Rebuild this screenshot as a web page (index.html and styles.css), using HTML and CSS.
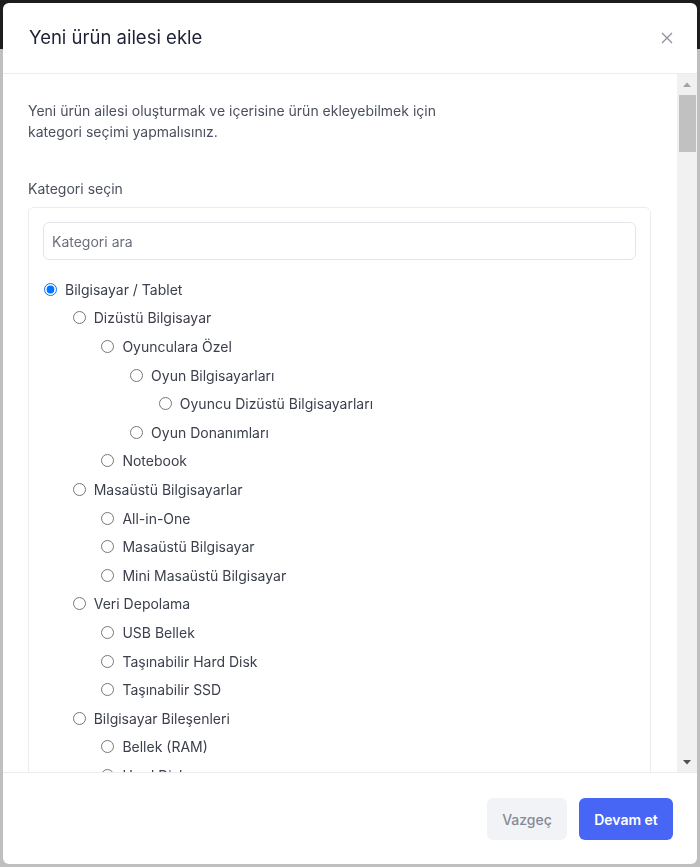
FILE: index.html
```html
<!DOCTYPE html>
<html lang="tr">
<head>
<meta charset="utf-8">
<title>Yeni ürün ailesi ekle</title>
<link rel="stylesheet" href="styles.css">
</head>
<body>
<div class="page">
  <div class="page-top"></div>
  <div class="page-rest"></div>
</div>
<div class="modal" role="dialog" aria-labelledby="modal-title">
  <header class="modal-header">
    <h2 class="modal-title" id="modal-title">Yeni ürün ailesi ekle</h2>
    <button class="close-btn" type="button" aria-label="Kapat">
      <svg width="12" height="12" viewBox="0 0 12 12"><path d="M1 1L11 11M11 1L1 11" stroke="#8e909b" stroke-width="1.3" fill="none"/></svg>
    </button>
  </header>
  <div class="body-wrap">
    <div class="modal-body">
      <p class="intro">Yeni ürün ailesi oluşturmak ve içerisine ürün ekleyebilmek için kategori seçimi yapmalısınız.</p>
      <div class="field-label">Kategori seçin</div>
      <div class="tree-box">
        <input class="search" type="text" placeholder="Kategori ara">
        <ul class="tree">
          <li class="row l0"><input type="radio" name="cat" checked><span>Bilgisayar / Tablet</span></li>
          <li class="row l1"><input type="radio" name="cat"><span>Dizüstü Bilgisayar</span></li>
          <li class="row l2"><input type="radio" name="cat"><span>Oyunculara Özel</span></li>
          <li class="row l3"><input type="radio" name="cat"><span>Oyun Bilgisayarları</span></li>
          <li class="row l4"><input type="radio" name="cat"><span>Oyuncu Dizüstü Bilgisayarları</span></li>
          <li class="row l3"><input type="radio" name="cat"><span>Oyun Donanımları</span></li>
          <li class="row l2"><input type="radio" name="cat"><span>Notebook</span></li>
          <li class="row l1"><input type="radio" name="cat"><span>Masaüstü Bilgisayarlar</span></li>
          <li class="row l2"><input type="radio" name="cat"><span>All-in-One</span></li>
          <li class="row l2"><input type="radio" name="cat"><span>Masaüstü Bilgisayar</span></li>
          <li class="row l2"><input type="radio" name="cat"><span>Mini Masaüstü Bilgisayar</span></li>
          <li class="row l1"><input type="radio" name="cat"><span>Veri Depolama</span></li>
          <li class="row l2"><input type="radio" name="cat"><span>USB Bellek</span></li>
          <li class="row l2"><input type="radio" name="cat"><span>Taşınabilir Hard Disk</span></li>
          <li class="row l2"><input type="radio" name="cat"><span>Taşınabilir SSD</span></li>
          <li class="row l1"><input type="radio" name="cat"><span>Bilgisayar Bileşenleri</span></li>
          <li class="row l2"><input type="radio" name="cat"><span>Bellek (RAM)</span></li>
          <li class="row l2"><input type="radio" name="cat"><span>Hard Disk</span></li>
          <li class="row l2"><input type="radio" name="cat"><span>SSD</span></li>
          <li class="row l2"><input type="radio" name="cat"><span>Ekran Kartı</span></li>
          <li class="row l2"><input type="radio" name="cat"><span>İşlemci</span></li>
          <li class="row l2"><input type="radio" name="cat"><span>Anakart</span></li>
          <li class="row l2"><input type="radio" name="cat"><span>Power Supply</span></li>
          <li class="row l2"><input type="radio" name="cat"><span>Bilgisayar Kasası</span></li>
          <li class="row l2"><input type="radio" name="cat"><span>Soğutma Sistemleri</span></li>
          <li class="row l1"><input type="radio" name="cat"><span>Çevre Birimleri</span></li>
          <li class="row l2"><input type="radio" name="cat"><span>Klavye</span></li>
          <li class="row l2"><input type="radio" name="cat"><span>Mouse</span></li>
          <li class="row l2"><input type="radio" name="cat"><span>Web Kamera</span></li>
          <li class="row l2"><input type="radio" name="cat"><span>Kulaklık</span></li>
          <li class="row l1"><input type="radio" name="cat"><span>Monitör</span></li>
          <li class="row l1"><input type="radio" name="cat"><span>Yazıcı ve Tarayıcı</span></li>
          <li class="row l1"><input type="radio" name="cat"><span>Tablet</span></li>
          <li class="row l1"><input type="radio" name="cat"><span>Ağ Ürünleri</span></li>
          <li class="row l0"><input type="radio" name="cat"><span>Telefon</span></li>
          <li class="row l1"><input type="radio" name="cat"><span>Cep Telefonu</span></li>
          <li class="row l1"><input type="radio" name="cat"><span>Telefon Aksesuarları</span></li>
          <li class="row l0"><input type="radio" name="cat"><span>TV, Ses ve Görüntü</span></li>
          <li class="row l0"><input type="radio" name="cat"><span>Oyun ve Oyun Konsolları</span></li>
          <li class="row l0"><input type="radio" name="cat"><span>Foto ve Kamera</span></li>
          <li class="row l0"><input type="radio" name="cat"><span>Beyaz Eşya</span></li>
        </ul>
      </div>
    </div>
    <div class="scrollbar" aria-hidden="true">
      <div class="sb-btn">
        <svg width="8" height="5" viewBox="0 0 8 5"><path d="M0 5L4 0.5L8 5Z" fill="#a3a3a3"/></svg>
      </div>
      <div class="sb-track">
        <div class="sb-thumb"></div>
      </div>
      <div class="sb-btn">
        <svg width="8" height="5" viewBox="0 0 8 5"><path d="M0 0L8 0L4 4.5Z" fill="#505050"/></svg>
      </div>
    </div>
  </div>
  <footer class="modal-footer">
    <button class="btn btn-secondary" type="button">Vazgeç</button>
    <button class="btn btn-primary" type="button">Devam et</button>
  </footer>
</div>
</body>
</html>
```
FILE: styles.css
```css
* { box-sizing: border-box; }

html, body {
  margin: 0;
  height: 100%;
  overflow: hidden;
}

body {
  font-family: Inter, "Noto Sans", "Liberation Sans", sans-serif;
  background: #bebebf;
}

.page {
  display: flex;
  flex-direction: column;
  height: 100%;
}

.page-top {
  height: 49px;
  background: #1d1d1e;
}

.page-rest {
  flex: 1;
  background: #bfbfc0;
}

.modal {
  position: fixed;
  top: 3px;
  left: 3px;
  right: 3px;
  bottom: 3px;
  background: #ffffff;
  border-radius: 6px;
  display: flex;
  flex-direction: column;
  overflow: hidden;
}

.modal-header {
  display: flex;
  align-items: center;
  justify-content: space-between;
  padding: 20px 24px 22px 26px;
  border-bottom: 1px solid #ebebf0;
  flex: none;
}

.modal-title {
  margin: 0;
  font-size: 18.5px;
  line-height: 28px;
  font-weight: 400;
  color: #1f2235;
}

.close-btn {
  border: 0;
  background: none;
  padding: 0;
  width: 12px;
  height: 12px;
  display: flex;
  margin-top: 2px;
  cursor: pointer;
}

.body-wrap {
  flex: 1;
  min-height: 0;
  display: flex;
}

.modal-body {
  flex: 1;
  min-width: 0;
  overflow: hidden;
  padding: 27px 26px 20px 25px;
}

.scrollbar {
  flex: none;
  width: 20px;
  display: flex;
  flex-direction: column;
  background: #f1f1f1;
}

.sb-btn {
  height: 20px;
  display: flex;
  align-items: center;
  justify-content: center;
  flex: none;
}

.sb-track {
  flex: 1;
  padding: 1px 1px 0 2px;
}

.sb-thumb {
  height: 57px;
  background: #c1c1c1;
}

.intro {
  margin: 0;
  max-width: 440px;
  font-size: 14px;
  line-height: 20.5px;
  color: #4b505e;
}

.field-label {
  margin-top: 37px;
  font-size: 14px;
  line-height: 20px;
  color: #4b505e;
}

.tree-box {
  margin-top: 8px;
  border: 1px solid #ebecf1;
  border-radius: 6px;
  padding: 14px;
}

.search {
  display: block;
  width: 100%;
  height: 38px;
  border: 1px solid #e3e5eb;
  border-radius: 6px;
  padding: 0 8px;
  font-family: inherit;
  font-size: 14px;
  color: #333;
  outline: none;
}

.search::placeholder {
  color: #6c6f7b;
}

.tree {
  list-style: none;
  margin: 15px 0 0;
  padding: 0;
}

.row {
  display: flex;
  align-items: center;
  gap: 8px;
  height: 28.6px;
  font-size: 14px;
  color: #3c404d;
}

.row input {
  margin: 0 0 0 1px;
  width: 13px;
  height: 13px;
  flex: none;
}

.l1 { padding-left: 28.7px; }
.l2 { padding-left: 57.4px; }
.l3 { padding-left: 86.1px; }
.l4 { padding-left: 114.8px; }

.modal-footer {
  flex: none;
  display: flex;
  justify-content: flex-end;
  gap: 12px;
  padding: 25px 24px 24px;
  border-top: 1px solid #ebebf0;
}

.btn {
  height: 42px;
  border: 0;
  border-radius: 6px;
  font-family: inherit;
  font-size: 14px;
  font-weight: 500;
  cursor: pointer;
}

.btn-secondary {
  width: 80px;
  background: #f1f3f7;
  color: #868995;
}

.btn-primary {
  width: 94px;
  background: #4766f6;
  color: #ffffff;
  font-weight: 600;
}
```
